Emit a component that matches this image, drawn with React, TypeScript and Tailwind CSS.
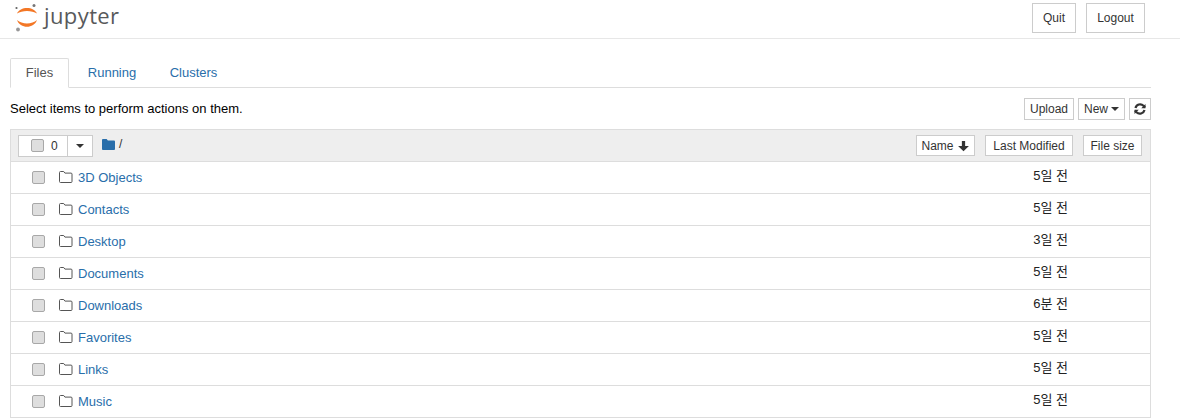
import React from "react";

const rows = [
  ["3D Objects", "5일 전"],
  ["Contacts", "5일 전"],
  ["Desktop", "3일 전"],
  ["Documents", "5일 전"],
  ["Downloads", "6분 전"],
  ["Favorites", "5일 전"],
  ["Links", "5일 전"],
  ["Music", "5일 전"],
];

function Logo() {
  return (
    <svg width="26" height="31" viewBox="0 0 26 31" className="block">
      <path d="M3 11.500 C6 4 20 4 23 11.500 C18 8 8 8 3 11.500 Z" fill="#f37726" />
      <path d="M3 18 C6 27 20 27 23 18 C18 22.500 8 22.500 3 18 Z" fill="#f37726" />
      <circle cx="20" cy="3.500" r="1.500" fill="#767677" />
      <circle cx="2.500" cy="6" r="1.100" fill="#616262" />
      <circle cx="4" cy="27.500" r="1.900" fill="#989798" />
    </svg>
  );
}

function FolderOpen() {
  return (
    <svg width="14" height="12" viewBox="0 0 14 12" className="block">
      <path
        d="M1.500.5h3.200l1.200 1.600h6.100a1 1 0 0 1 1 1v7.400a1 1 0 0 1-1 1H1.500a1 1 0 0 1-1-1V1.500a1 1 0 0 1 1-1z"
        fill="none"
        stroke="#555"
        strokeWidth="1"
      />
    </svg>
  );
}

function Check({ className = "" }: { className?: string }) {
  return (
    <span
      className={
        "block w-[13px] h-[13px] rounded-[2px] border border-[#a8a8a8] bg-[#dedede] " + className
      }
    />
  );
}

function Btn({ children, className = "" }: { children: React.ReactNode; className?: string }) {
  return (
    <span
      className={
        "flex items-center justify-center bg-white border border-[#cccccc] text-[12px] text-[#333] " +
        className
      }
    >
      {children}
    </span>
  );
}

function Caret() {
  return <span className="inline-block w-0 h-0 border-x-4 border-x-transparent border-t-4 border-t-[#333]" />;
}

export default function App() {
  return (
    <div className="w-[1180px] h-[419px] overflow-hidden bg-white text-[13px] text-black font-['Liberation_Sans','Noto_Sans_CJK_KR',sans-serif]">
      <header className="h-[39px] border-b border-[#e7e7e7] flex items-start justify-between pl-[14px] pr-[35px]">
        <div className="flex items-start pt-[2px]">
          <Logo />
          <span className="ml-[4px] text-[#58595b] text-[22px] leading-[27px] tracking-[0.4px] font-['Open_Sans',sans-serif]">
            jupyter
          </span>
        </div>
        <div className="flex gap-[10px] pt-[3px]">
          <Btn className="w-[44px] h-[30px]">Quit</Btn>
          <Btn className="w-[59px] h-[30px]">Logout</Btn>
        </div>
      </header>

      <main className="w-[1141px] ml-[10px]">
        <nav className="flex h-[49px] pt-[19px] border-b border-[#dddddd]">
          <span className="w-[59px] h-[30px] flex items-center justify-center bg-white border border-[#dddddd] border-b-white rounded-t-[2px] text-[#555] text-[13px]">
            Files
          </span>
          <span className="h-[30px] w-[86px] flex items-center justify-center text-[#296eaa]">Running</span>
          <span className="h-[30px] w-[77px] flex items-center justify-center text-[#296eaa]">Clusters</span>
        </nav>

        <div className="flex items-start justify-between h-[41px] pt-[10px]">
          <span className="text-[13px] leading-[23px] -mt-[1px]">Select items to perform actions on them.</span>
          <div className="flex gap-[4px]">
            <Btn className="w-[50px] h-[22px]">Upload</Btn>
            <Btn className="w-[47px] h-[22px] gap-[3px]">
              New
              <Caret />
            </Btn>
            <Btn className="w-[22px] h-[22px]">
              <svg width="12" height="12" viewBox="0 0 24 24" fill="none" stroke="#333" strokeWidth="4.500" className="block">
                <path d="M3 10a9.500 9.500 0 0 1 16-4.500L22 9" />
                <path d="M23 2v8.500h-8.500" fill="#333" stroke="none" />
                <path d="M21 14a9.500 9.500 0 0 1-16 4.500L2 15" />
                <path d="M1 22v-8.500h8.500" fill="#333" stroke="none" />
              </svg>
            </Btn>
          </div>
        </div>

        <section className="border-x border-[#dddddd]">
          <div className="h-[33px] bg-[#eeeeee] border-y border-[#dddddd] flex items-center justify-between pl-[7px] pr-[8px]">
            <div className="flex items-center">
              <div className="flex w-[75px] h-[22px] bg-white border border-[#cccccc]">
                <span className="w-[49px] flex items-center pl-[12px] gap-[7px] border-r border-[#cccccc] text-[12px] text-[#333]">
                  <Check className="w-[12px] h-[12px]" />0
                </span>
                <span className="flex-1 flex items-center justify-center">
                  <Caret />
                </span>
              </div>
              <svg width="13" height="11" viewBox="0 0 14 11" preserveAspectRatio="none" className="block ml-[9px] -mt-[3px]">
                <path d="M1 0h4l1.300 1.500H13a1 1 0 0 1 1 1V10a1 1 0 0 1-1 1H1a1 1 0 0 1-1-1V1a1 1 0 0 1 1-1z" fill="#296eaa" />
              </svg>
              <span className="ml-[4px] -mt-[3px] text-[12px] text-[#333]">/</span>
            </div>
            <div className="flex">
              <Btn className="w-[59px] h-[21px] gap-[3px]">
                Name
                <svg width="13" height="12" viewBox="0 0 12 12" preserveAspectRatio="none" className="block">
                  <path d="M4.500 1h3v5H11L6 11.200 1 6h3.500z" fill="#333" />
                </svg>
              </Btn>
              <Btn className="w-[88px] h-[21px] ml-[10px]">Last Modified</Btn>
              <Btn className="w-[59px] h-[21px] ml-[10px]">File size</Btn>
            </div>
          </div>
          {rows.map(([name, time]) => (
            <div key={name} className="h-[32px] border-b border-[#dddddd] flex items-center">
              <Check className="ml-[21px] -mt-[1px]" />
              <span className="ml-[14px] -mt-[2px]">
                <FolderOpen />
              </span>
              <span className="ml-[5px] text-[#296eaa]">{name}</span>
              <span className="ml-auto mr-[82px] -mt-[3px] text-[13px] text-[#222]">{time}</span>
            </div>
          ))}
        </section>
      </main>
    </div>
  );
}
